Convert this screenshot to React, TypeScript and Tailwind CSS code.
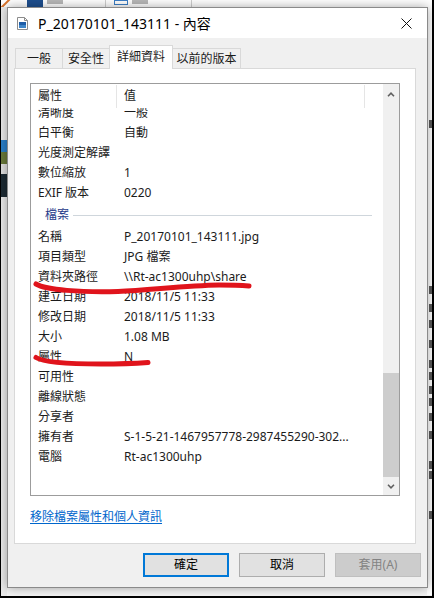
import React from "react";

const topRows: [string, string][] = [
  ["清晰度", "一般"],
  ["白平衡", "自動"],
  ["光度測定解譯", ""],
  ["數位縮放", "1"],
  ["EXIF 版本", "0220"],
];

const fileRows: [string, string][] = [
  ["名稱", "P_20170101_143111.jpg"],
  ["項目類型", "JPG 檔案"],
  ["資料夾路徑", "\\\\Rt-ac1300uhp\\share"],
  ["建立日期", "2018/11/5 11:33"],
  ["修改日期", "2018/11/5 11:33"],
  ["大小", "1.08 MB"],
  ["屬性", "N"],
  ["可用性", ""],
  ["離線狀態", ""],
  ["分享者", ""],
  ["擁有者", "S-1-5-21-1467957778-2987455290-302..."],
  ["電腦", "Rt-ac1300uhp"],
];

const fragments: number[] = [120, 286, 304, 320, 340, 360, 372, 386, 398, 413, 431, 461, 471, 511];

function Row({ k, v }: { k: string; v: string }) {
  return (
    <div className="flex h-[20px] shrink-0 items-center leading-[20px]">
      <div className="w-[93px] shrink-0 pl-[7px] whitespace-nowrap">{k}</div>
      <div className="whitespace-nowrap">{v}</div>
    </div>
  );
}

function FileIcon() {
  return (
    <svg width="11" height="13" viewBox="0 0 11 13">
      <path d="M0.5 0.5 H7.5 L10.5 3.5 V12.5 H0.5 Z" fill="#ffffff" stroke="#8c8c8c" />
      <path d="M7.5 0.5 V3.5 H10.5" fill="none" stroke="#8c8c8c" />
      <rect x="2" y="5" width="7" height="6" fill="#1f5ea8" />
      <rect x="2" y="8" width="7" height="3" fill="#3f86c9" />
    </svg>
  );
}

function Chevron({ up }: { up: boolean }) {
  return (
    <svg width="8" height="5" viewBox="0 0 8 5">
      <path
        d={up ? "M1 4.2 L4 1.2 L7 4.2" : "M1 0.8 L4 3.8 L7 0.8"}
        fill="none"
        stroke="#606060"
        strokeWidth="1.6"
      />
    </svg>
  );
}

export default function App() {
  return (
    <div className="relative h-[598px] w-[434px] overflow-hidden border-r-2 border-b-2 border-l border-black bg-[#f4f4f4] pt-[7px] pl-[6px] font-['Noto_Sans','Noto_Sans_CJK_TC',sans-serif] text-[12px] text-[#1b1b1b]">
      {/* desktop behind the dialog */}
      <div className="absolute top-0 left-0 h-[7px] w-[434px] bg-white">
        <div className="absolute top-0 left-[26px] h-[7px] w-[16px] bg-[#1e4f8f]" />
        <div className="absolute top-0 left-[46px] h-[4px] w-[16px] bg-[#b8b8b8]" />
        <div className="absolute top-0 left-[104px] h-[7px] w-px bg-[#cfcfcf]" />
        <div className="absolute top-0 left-[113px] h-[5px] w-[14px] border border-[#3d7fc6]" />
        <div className="absolute top-0 left-[131px] h-[4px] w-[16px] bg-[#b8b8b8]" />
        <div className="absolute top-0 left-[190px] h-[7px] w-px bg-[#cfcfcf]" />
        <div className="absolute top-[-3px] left-[-2px] h-[2px] w-[16px] origin-left translate-y-[12px] rotate-[-45deg] bg-[#d9752e]" />
      </div>
      <div className="absolute top-[7px] left-0 h-[590px] w-[6px] bg-[#ebebeb]">
        <div className="absolute top-[133px] left-0 h-[57px] w-[6px] bg-[#1c2a33]">
          <div className="h-[12px] w-[6px] bg-[#2a7fc9]" />
          <div className="h-[12px] w-[6px] bg-[#6a7a3a]" />
          <div className="h-[10px] w-[6px] bg-[#e0e0e0]" />
        </div>
      </div>
      <div className="absolute top-[7px] left-[426px] h-[588px] w-[6px] bg-white">
        {fragments.map((t) => (
          <div
            key={t}
            className="absolute left-[2px] h-[8px] w-[3px] bg-[#5a5a5a]"
            style={{ top: t - 7 }}
          />
        ))}
      </div>

      {/* dialog */}
      <div className="relative z-10 flex h-[581px] w-[421px] flex-col border border-[#8a8a8a] bg-[#f0f0f0] shadow-[0_0_10px_rgba(0,0,0,0.35)]">
        {/* title bar */}
        <div className="flex h-[30px] shrink-0 items-center bg-white pr-[15px] pl-[9px]">
          <FileIcon />
          <div className="ml-[10px] flex-1 text-[14px] text-black">P_20170101_143111 - 內容</div>
          <svg width="11" height="11" viewBox="0 0 11 11">
            <path d="M0.5 0.5 L10.5 10.5 M10.5 0.5 L0.5 10.5" stroke="#111" strokeWidth="1" />
          </svg>
        </div>

        {/* tabs */}
        <div className="mt-[8px] ml-[7px] flex h-[22px] items-end">
          <div className="flex h-[20px] w-[48px] items-center justify-center border border-b-0 border-[#d9d9d9] bg-[#f0f0f0]">一般</div>
          <div className="-ml-px flex h-[20px] w-[48px] items-center justify-center border border-b-0 border-[#d9d9d9] bg-[#f0f0f0]">安全性</div>
          <div className="relative z-10 -mb-px -ml-px flex h-[24px] w-[64px] items-center justify-center border border-b-0 border-[#d9d9d9] bg-white pb-[2px]">詳細資料</div>
          <div className="-ml-px flex h-[20px] w-[69px] items-center justify-center border border-b-0 border-[#d9d9d9] bg-[#f0f0f0]">以前的版本</div>
        </div>

        {/* panel */}
        <div className="ml-[6px] flex h-[476px] w-[402px] shrink-0 flex-col border border-[#d9d9d9] bg-white pt-[14px] pl-[15px]">
          <div className="flex h-[413px] w-[370px] border border-[#9c9c9c]">
            <div className="flex flex-1 flex-col overflow-hidden">
              <div className="relative z-10 flex h-[24px] shrink-0 items-center bg-white leading-[20px]">
                <div className="h-[24px] w-[85px] shrink-0 pt-[2px] pl-[7px]">屬性</div>
                <div className="mt-px h-[23px] w-px bg-[#e5e5e5]" />
                <div className="h-[24px] w-[247px] shrink-0 pt-[2px] pl-[7px]">值</div>
                <div className="mt-px h-[23px] w-px bg-[#e5e5e5]" />
              </div>
              <div className="-mt-[5px] flex flex-col">
                {topRows.map(([k, v]) => (
                  <Row key={k} k={k} v={v} />
                ))}
                <div className="flex h-[24px] shrink-0 items-center pr-[11px] pl-[14px]">
                  <span className="text-[#1e3a8a]">檔案</span>
                  <div className="ml-[4px] h-px flex-1 bg-[#cfd6dc]" />
                </div>
                {fileRows.map(([k, v]) => (
                  <Row key={k} k={k} v={v} />
                ))}
              </div>
            </div>
            <div className="flex w-[16px] shrink-0 flex-col bg-[#f0f0f0]">
              <div className="flex h-[17px] shrink-0 items-center justify-center pt-[4px]">
                <Chevron up />
              </div>
              <div className="flex flex-1 flex-col justify-end">
                <div className="mb-px h-[104px] w-[16px] bg-[#cdcdcd]" />
              </div>
              <div className="flex h-[17px] shrink-0 items-center justify-center pb-[1px]">
                <Chevron up={false} />
              </div>
            </div>
          </div>
          <div className="mt-[11px] h-[20px] leading-[20px]">
            <span className="text-[#0066cc] underline underline-offset-2">移除檔案屬性和個人資訊</span>
          </div>
        </div>

        {/* buttons */}
        <div className="mt-[9px] mr-[6px] flex justify-end gap-[10px]">
          <div className="flex h-[24px] w-[86px] items-center justify-center border-2 border-[#0078d7] bg-[#e1e1e1] text-black">確定</div>
          <div className="flex h-[24px] w-[86px] items-center justify-center border border-[#adadad] bg-[#e1e1e1] text-black">取消</div>
          <div className="flex h-[24px] w-[86px] items-center justify-center border border-[#bfbfbf] bg-[#cccccc] text-[#838383]">套用(A)</div>
        </div>
      </div>

      {/* red hand-drawn marks */}
      <svg className="pointer-events-none absolute top-0 left-0 z-20" width="434" height="598" viewBox="0 0 434 598">
        <path
          d="M35 284 C 45 290, 80 292.5, 117 291.5 C 150 290, 185 285.5, 218 285 C 232 285, 242 285.5, 248 286"
          fill="none"
          stroke="#e0141c"
          strokeWidth="5"
          strokeLinecap="round"
        />
        <path
          d="M35 357.5 C 42 362, 60 364, 100 364 C 125 364, 140 363, 147 362.5"
          fill="none"
          stroke="#e0141c"
          strokeWidth="5"
          strokeLinecap="round"
        />
      </svg>
    </div>
  );
}
